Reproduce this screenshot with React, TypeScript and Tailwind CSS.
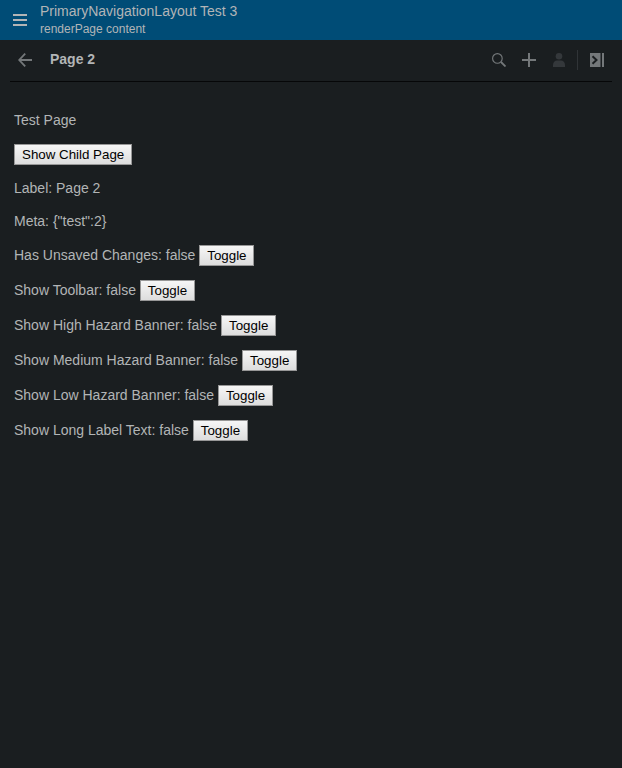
import type { ReactNode } from 'react';

const toggles = [
  'Has Unsaved Changes',
  'Show Toolbar',
  'Show High Hazard Banner',
  'Show Medium Hazard Banner',
  'Show Low Hazard Banner',
  'Show Long Label Text',
];

function Button({ children, width }: { children: ReactNode; width: string }) {
  return (
    <button
      className={`${width} flex h-[21px] items-center border border-[#979797] bg-gradient-to-b from-[#f6f6f6] to-[#dddddd] px-[7px] text-[13.333px] leading-[15px] whitespace-nowrap text-black`}
    >
      {children}
    </button>
  );
}

function Header() {
  return (
    <header className="flex h-10 bg-[#004c76]">
      <button aria-label="Menu" className="flex w-10 items-center justify-center">
        <svg width="14" height="12" viewBox="0 0 14 12" fill="#b2b5b6" shapeRendering="crispEdges">
          <path d="M0 0h14v2H0zM0 5h14v2H0zM0 10h14v2H0z" />
        </svg>
      </button>
      <div className="pt-[3px]">
        <div className="text-[14px] leading-[17px]">PrimaryNavigationLayout Test 3</div>
        <div className="pt-px text-[12px] leading-4">renderPage content</div>
      </div>
    </header>
  );
}

function PageBar() {
  return (
    <div className="mx-2.5 flex h-[42px] items-center border-b border-[#060708] pb-px text-[#74787a]">
      <button aria-label="Back" className="ml-2 w-8">
        <svg width="14" height="14" viewBox="0 0 14 14" fill="none" stroke="currentColor" strokeWidth="1.8">
          <path d="M14 7H1M7.2 .6L1.2 7l6 6.4" />
        </svg>
      </button>
      <h1 className="flex-1 pb-0.5 text-[14px] leading-4 font-bold text-[#b2b5b6]">Page 2</h1>
      <div className="flex items-center">
        <svg className="mr-4" width="14" height="14" viewBox="0 0 14 14" fill="none" stroke="currentColor">
          <circle cx="5.4" cy="5.4" r="4.8" strokeWidth="1.15" />
          <path d="M9 9l4.5 4.5" strokeWidth="1.8" />
        </svg>
        <svg className="mr-4" width="14" height="14" viewBox="0 0 14 14" fill="currentColor">
          <path d="M6 0h2v6h6v2H8v6H6V8H0V6h6z" />
        </svg>
        <svg className="mr-[11px]" width="14" height="14" viewBox="0 0 14 14" fill="#34383b">
          <circle cx="7" cy="3.3" r="3.3" />
          <path d="M1 14v-2C1 9.2 2.8 7.4 5 7.4h4c2.200 0 4 1.800 4 4.600v2z" />
        </svg>
        <div className="mr-3 h-5 w-px bg-[#303437]" />
        <svg className="mr-2" width="14" height="14" viewBox="0 0 14 14">
          <path d="M0 0h10v14H0zM12 0h2v14h-2z" fill="currentColor" />
          <path d="M10 0h1v14h-1z" fill="#45494c" />
          <path d="M2.5 3.2L6.5 7l-4 3.8" fill="none" stroke="#1a1e20" strokeWidth="2" />
        </svg>
      </div>
    </div>
  );
}

export default function App() {
  return (
    <div className="min-h-screen bg-[#1a1e20] font-['Liberation_Sans',Arial,sans-serif] text-[#b2b5b6]">
      <Header />
      <PageBar />
      <main className="px-3.5 pt-[30px] text-[14px] leading-4">
        <p>Test Page</p>
        <div className="mt-4">
          <Button width="w-[118px]">Show Child Page</Button>
        </div>
        <p className="mt-[15px]">Label: Page 2</p>
        <p className="mt-[17px]">Meta: {'{"test":2}'}</p>
        <div className="mt-4 flex flex-col gap-3.5">
          {toggles.map((label) => (
            <div key={label} className="flex items-start">
              <span className="pt-0.5 whitespace-pre">{label}: false </span>
              <Button width="w-[55px]">Toggle</Button>
            </div>
          ))}
        </div>
      </main>
    </div>
  );
}
